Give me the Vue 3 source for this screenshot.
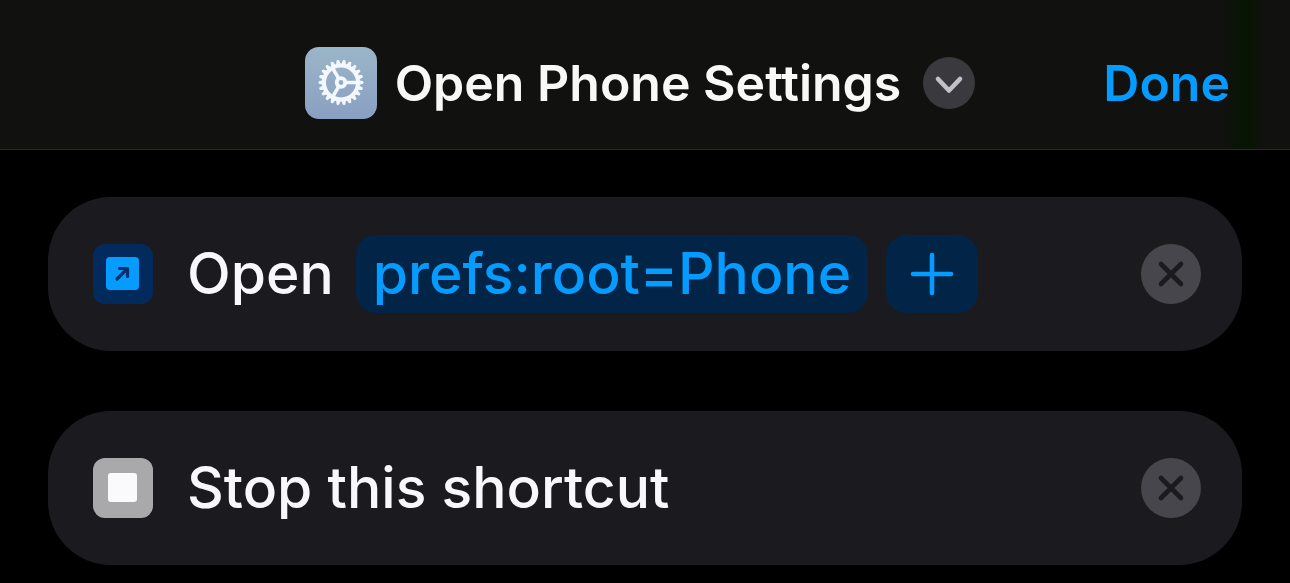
<script setup>
import { ref } from 'vue'

const teeth = Array.from({ length: 22 }, (_, i) => (i * 360) / 22)
const spokes = [0, 120, 240]

const actions = ref([
  { id: 1, kind: 'link', label: 'Open', value: 'prefs:root=Phone' },
  { id: 2, kind: 'stop', label: 'Stop this shortcut' },
])

function removeAction(id) {
  actions.value = actions.value.filter((a) => a.id !== id)
}
</script>

<template>
  <div class="editor">
    <header class="bar">
      <div class="heading">
        <span class="app-icon">
          <svg viewBox="0 0 72 72" aria-hidden="true">
            <g transform="translate(36 35.5)" fill="none" stroke="#f4f8fe" stroke-linecap="round">
              <path v-for="a in teeth" :key="'t' + a" d="M18 -1.8 L22 -0.8 V0.8 L18 1.8 Z" fill="#f4f8fe" stroke-width="1" stroke-linejoin="round" :transform="`rotate(${a})`" />
              <circle r="17" stroke-width="4" />
              <line v-for="a in spokes" :key="'s' + a" x1="5" y1="0" x2="17" y2="0" stroke-width="3.6" :transform="`rotate(${a})`" />
              <circle r="4.3" stroke-width="3.8" />
            </g>
          </svg>
        </span>
        <h1 class="title">Open Phone Settings</h1>
        <button class="round chevron" type="button" aria-label="Shortcut options">
          <svg viewBox="0 0 52 52" aria-hidden="true">
            <path d="M15 22 L26 33.5 L37 22" fill="none" stroke="#c3c2ca" stroke-width="4.6" stroke-linecap="round" stroke-linejoin="round" />
          </svg>
        </button>
      </div>
      <button class="done" type="button">Done</button>
    </header>

    <main class="list">
      <section v-for="action in actions" :key="action.id" class="card">
        <span class="badge" :class="action.kind">
          <svg v-if="action.kind === 'link'" viewBox="0 0 60 60" aria-hidden="true">
            <rect x="13" y="13" width="33" height="33" rx="4" fill="#069bff" />
            <path d="M24 35 L34 25 M26.5 24.5 H34.5 V32.5" fill="none" stroke="#04306e" stroke-width="3.2" stroke-linecap="round" stroke-linejoin="round" />
          </svg>
          <svg v-else viewBox="0 0 60 60" aria-hidden="true">
            <rect x="15" y="15" width="29" height="29" rx="3" fill="#fafafc" />
          </svg>
        </span>
        <span class="label">{{ action.label }}</span>
        <template v-if="action.value">
          <button class="token" type="button">{{ action.value }}</button>
          <button class="token add" type="button" aria-label="Add URL">
            <svg viewBox="0 0 44 44" aria-hidden="true">
              <path d="M22 3 V41 M3 22 H41" fill="none" stroke="#069bff" stroke-width="4.6" stroke-linecap="round" />
            </svg>
          </button>
        </template>
        <button class="round remove" type="button" aria-label="Remove action" @click="removeAction(action.id)">
          <svg viewBox="0 0 60 60" aria-hidden="true">
            <path d="M20 20 L40 40 M40 20 L20 40" fill="none" stroke="#1b1a1f" stroke-width="4.6" stroke-linecap="round" />
          </svg>
        </button>
      </section>
    </main>
  </div>
</template>

<style>
body {
  margin: 0;
  background: #000;
}
</style>

<style scoped>
.editor {
  min-height: 100vh;
  box-sizing: border-box;
  background: #000;
  color: #f8f8fc;
  font-family: Inter, "Liberation Sans", sans-serif;
}

button {
  margin: 0;
  padding: 0;
  border: 0;
  background: none;
  color: inherit;
  font: inherit;
  cursor: pointer;
}

svg {
  display: block;
  width: 100%;
  height: 100%;
}

.bar {
  display: grid;
  grid-template-columns: 1fr auto 1fr;
  align-items: center;
  height: 150px;
  box-sizing: border-box;
  padding: 16px 60px 0 50px;
  border-bottom: 1px solid #2b2b2d;
  background:
    linear-gradient(to left, transparent 26px, #081504 38px, #081504 52px, transparent 66px),
    #11110f;
}

.heading {
  grid-column: 2;
  display: flex;
  align-items: center;
}

.app-icon {
  width: 72px;
  height: 72px;
  margin-right: 18px;
  border-radius: 14px;
  background: linear-gradient(#9ab6c8, #8a9fc2);
}

.title {
  margin: 0;
  color: #f8f8f6;
  font-size: 50px;
  font-weight: 600;
  line-height: 60px;
  white-space: nowrap;
}

.round {
  flex: none;
  border-radius: 50%;
}

.chevron {
  width: 52px;
  height: 52px;
  margin-left: 22px;
  background: #3a393d;
}

.done {
  justify-self: end;
  color: #069bff;
  font-size: 50px;
  font-weight: 600;
  line-height: 60px;
}

.list {
  display: flex;
  flex-direction: column;
  gap: 60px;
  padding: 47px 48px 19px;
}

.card {
  display: flex;
  align-items: center;
  min-height: 154px;
  box-sizing: border-box;
  padding: 0 41px 0 45px;
  border-radius: 63px;
  background: #1b1a1f;
  font-size: 57px;
  font-weight: 500;
  line-height: 78px;
  white-space: nowrap;
}

.badge {
  flex: none;
  width: 60px;
  height: 60px;
  margin-right: 34px;
  border-radius: 12px;
}

.badge.link {
  background: #022a5c;
}

.badge.stop {
  background: #a9a9ab;
}

.token {
  height: 78px;
  margin-left: 22px;
  padding: 0 17px;
  border-radius: 20px;
  background: #022446;
  color: #069bff;
}

.add {
  flex: none;
  width: 92px;
  margin-left: 18px;
  padding: 0 24px;
}

.add svg {
  height: 44px;
}

.remove {
  width: 60px;
  height: 60px;
  margin-left: auto;
  background: #47464c;
}
</style>
